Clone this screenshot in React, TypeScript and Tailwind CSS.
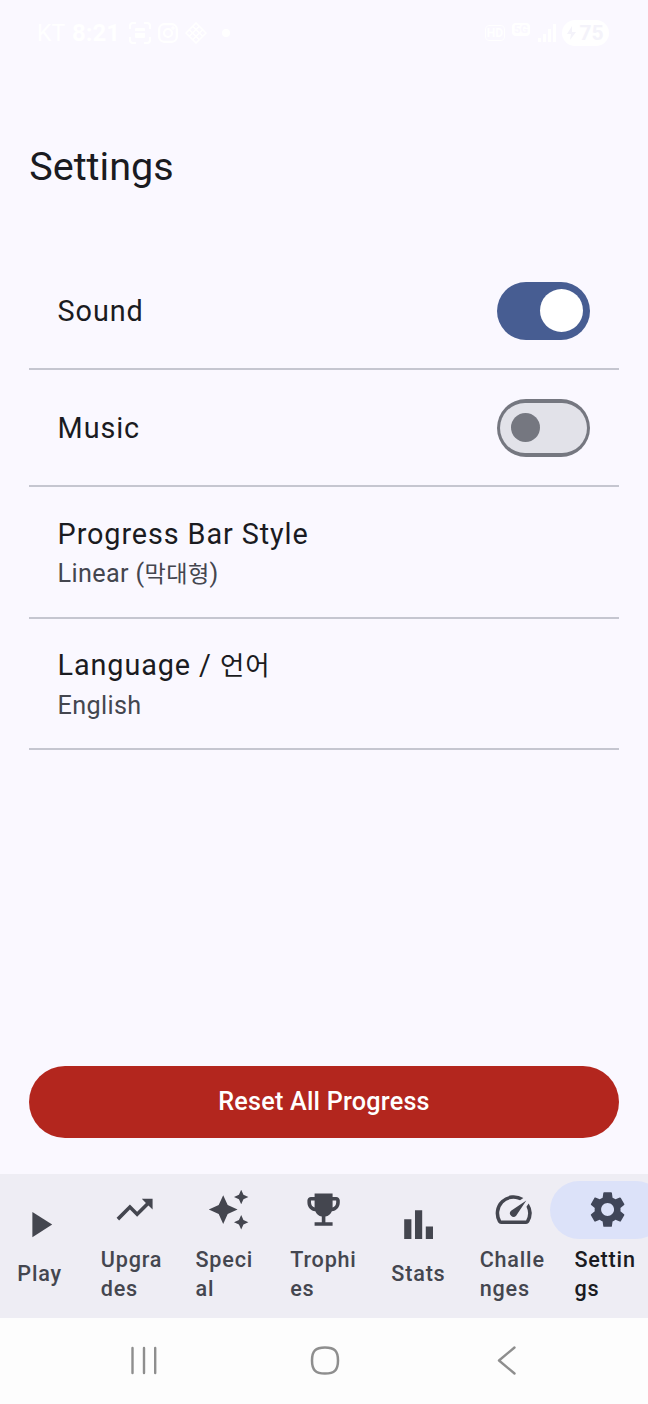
import React from 'react';
import {
  MdAutoAwesome,
  MdBarChart,
  MdEmojiEvents,
  MdPlayArrow,
  MdSettings,
  MdSpeed,
  MdTrendingUp,
} from 'react-icons/md';

const StatusBar = () => (
  <div className="flex h-[66px] shrink-0 items-center justify-between pl-[37px] pr-[39px] text-white">
    <div className="flex items-center">
      <span className="w-[35px] text-[23px] leading-none">KT</span>
      <span className="w-[57px] text-[24px] font-bold leading-none">8:21</span>
      <svg className="h-[22px] w-[22px]" viewBox="0 0 22 22" fill="none" stroke="currentColor" strokeWidth="2">
        <path d="M1 7V4a3 3 0 0 1 3-3h3M15 1h3a3 3 0 0 1 3 3v3M21 15v3a3 3 0 0 1-3 3h-3M7 21H4a3 3 0 0 1-3-3v-3" />
        <path d="M7 6h8a1 1 0 0 1 1 1v2H6V7a1 1 0 0 1 1-1zM6 11h10v4a1 1 0 0 1-1 1H7a1 1 0 0 1-1-1z" fill="currentColor" stroke="none" />
      </svg>
      <svg className="ml-[7px] h-5 w-5" viewBox="0 0 20 20" fill="none" stroke="currentColor" strokeWidth="2.200">
        <rect x="1.200" y="1.200" width="17.600" height="17.600" rx="5" />
        <circle cx="10" cy="10" r="4" />
        <circle cx="15" cy="5" r="0.6" />
      </svg>
      <svg className="ml-[7px] h-[22px] w-[22px]" viewBox="0 0 22 22" fill="none" stroke="currentColor" strokeWidth="1.500">
        <path d="M11 1l10 10-10 10L1 11zM7.700 4.300l10 10M4.300 7.700l10 10M14.300 4.300l-10 10M17.700 7.700l-10 10" />
      </svg>
      <span className="ml-[15px] h-[8px] w-[8px] rounded-full bg-white" />
    </div>
    <div className="flex items-center">
      <span className="flex h-4 w-[20px] items-center justify-center rounded-sm border border-white text-[12px] font-bold leading-none">HD</span>
      <span className="mb-2 ml-[7px] flex h-[13px] w-[18px] items-center justify-center rounded-sm bg-white text-[11px] font-bold leading-none text-[#faf8ff]">5G</span>
      <svg className="ml-2 h-[18px] w-[18px]" viewBox="0 0 18 18" fill="currentColor">
        <path d="M0 14h3v4H0zM5 10h3v8H5zM10 5h3v13h-3zM15 0h3v18h-3z" />
      </svg>
      <span className="ml-[6px] flex h-[26px] w-[47px] items-center justify-center gap-[3px] rounded-full bg-white text-[21px] font-bold leading-none text-[#f4f3fa]">
        <svg className="h-[14px] w-[9px]" viewBox="0 0 9 14" fill="currentColor">
          <path d="M5 0L0 8h4l-1 6 6-8H5z" />
        </svg>
        75
      </span>
    </div>
  </div>
);

const Toggle = ({ on }: { on: boolean }) =>
  on ? (
    <div className="flex h-[57.6px] w-[93.6px] items-center justify-end rounded-full bg-[#475d92] pr-[7.2px]">
      <div className="h-[43.2px] w-[43.2px] rounded-full bg-white" />
    </div>
  ) : (
    <div className="flex h-[57.6px] w-[93.6px] items-center rounded-full bg-[#757780] p-[3.6px]">
      <div className="flex h-full w-full items-center rounded-full bg-[#e2e2e9] pl-[10.8px]">
        <div className="h-[28.8px] w-[28.8px] rounded-full bg-[#757780]" />
      </div>
    </div>
  );

const Divider = () => <div className="h-[1.8px] bg-[#c5c6d0]" />;

const switches = [
  { label: 'Sound', on: true },
  { label: 'Music', on: false },
];

// Hangul is set a little smaller than the Latin text around it
const Hangul = ({ children }: { children: React.ReactNode }) => (
  <span className="text-[0.92em]">{children}</span>
);

const options = [
  { id: 'bar', label: 'Progress Bar Style', value: <>Linear (<Hangul>막대형</Hangul>)</> },
  { id: 'language', label: <>Language / <Hangul>언어</Hangul></>, value: 'English' },
];

const tabs = [
  { label: 'Play', icon: MdPlayArrow },
  { label: 'Upgrades', icon: MdTrendingUp },
  { label: 'Special', icon: MdAutoAwesome },
  { label: 'Trophies', icon: MdEmojiEvents },
  { label: 'Stats', icon: MdBarChart },
  { label: 'Challenges', icon: MdSpeed },
  { label: 'Settings', icon: MdSettings, active: true },
];

const App = () => {
  return (
    <div className="flex h-[1404px] w-[648px] flex-col overflow-hidden bg-[#faf8ff] font-[Roboto,'Noto_Sans_CJK_KR',sans-serif] text-[#1a1b21]">
      <StatusBar />

      <h1 className="mt-[72px] shrink-0 pl-[29.2px] text-[39.6px] leading-[57px]">Settings</h1>

      <main className="flex flex-1 flex-col px-[28.8px] pb-9 pt-[58.2px]">
        {switches.map((item) => (
          <div key={item.label}>
            <div className="flex h-[115.2px] items-center justify-between px-[28.8px]">
              <span className="pt-[1.5px] text-[28.8px] leading-[43.2px] tracking-[0.9px]">{item.label}</span>
              <Toggle on={item.on} />
            </div>
            <Divider />
          </div>
        ))}
        {options.map((item) => (
          <div key={item.id}>
            <div className="flex h-[129.6px] flex-col justify-center px-[28.8px] pt-[1.5px]">
              <span className="text-[28.8px] leading-[43.2px] tracking-[0.9px]">{item.label}</span>
              <span className="text-[25.2px] leading-9 tracking-[0.36px] text-[#44464f]">{item.value}</span>
            </div>
            <Divider />
          </div>
        ))}

        <button className="mt-auto h-[72px] shrink-0 rounded-full bg-[#b3261e] text-[25.2px] font-medium tracking-[0.22px] text-white">
          Reset All Progress
        </button>
      </main>

      <nav className="-ml-[0.6px] flex h-36 shrink-0 gap-[14.4px] bg-[#eeedf4] pb-[6.4px]">
        {tabs.map(({ label, icon: Icon, active }) => (
          <div
            key={label}
            className={`flex min-w-0 flex-1 flex-col items-center justify-center ${active ? 'text-[#1a1b21]' : 'text-[#44464f]'}`}
          >
            <div
              className={`flex h-[57.6px] w-[115.2px] shrink-0 items-center justify-center rounded-full ${active ? 'bg-[#dce2f9] text-[#404659]' : ''}`}
            >
              <Icon className="h-[43.2px] w-[43.2px]" />
            </div>
            <span className="mt-[7.2px] max-w-[67px] break-all text-[21.6px] font-medium leading-[28.8px] tracking-[0.8px]">
              {label}
            </span>
          </div>
        ))}
      </nav>

      <div className="flex h-[86.4px] shrink-0 items-center bg-[#fdfdfd] pb-[2px] pl-[129.5px] text-[#8e8e8e]">
        <svg className="h-[30px] w-[28px]" viewBox="0 0 28 30" fill="none" stroke="currentColor" strokeWidth="2.400" strokeLinecap="round">
          <path d="M2.500 3v25M14 3v25M25.200 3v25" />
        </svg>
        <svg className="ml-[151px] h-[32px] w-[32px]" viewBox="0 0 32 32" fill="none" stroke="currentColor" strokeWidth="2.500">
          <path d="M16 3.500c9.500 0 13 3.500 13 13s-3.500 13-13 13-13-3.500-13-13 3.500-13 13-13z" />
        </svg>
        <svg className="ml-[155px] h-[32px] w-[22px]" viewBox="0 0 22 32" fill="none" stroke="currentColor" strokeWidth="2.400" strokeLinecap="round" strokeLinejoin="round">
          <path d="M18.500 3.500L3 16.500l15.500 13" />
        </svg>
      </div>
    </div>
  );
};

export default App;
